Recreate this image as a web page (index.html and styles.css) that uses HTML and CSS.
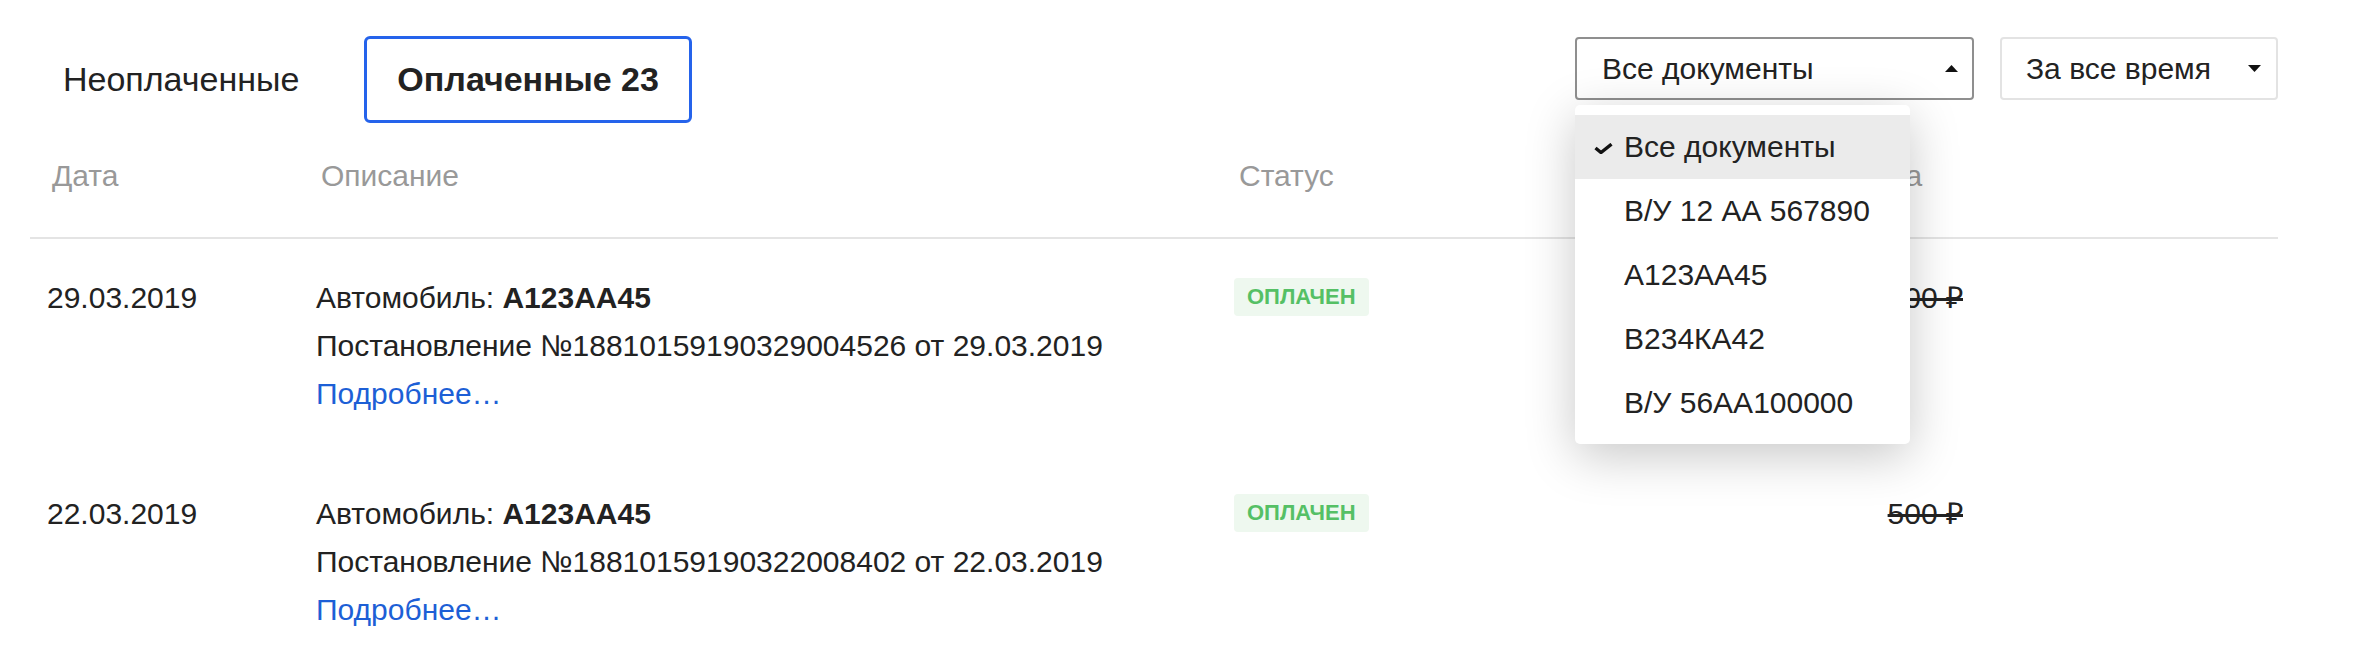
FILE: index.html
```html
<!DOCTYPE html>
<html lang="ru">
<head>
    <meta charset="UTF-8">
    <meta name="viewport" content="width=device-width, initial-scale=1.0">
    <title>Штрафы</title>
    <link rel="stylesheet" href="styles.css">
</head>
<body>
    <div class="page">
        <div class="toolbar">
            <div class="tabs">
                <div class="tab">Неоплаченные</div>
                <div class="tab active">Оплаченные 23</div>
            </div>
            <div class="filters">
                <div class="select-wrap">
                    <div class="select open">
                        <span>Все документы</span>
                        <svg class="arrow" width="13" height="7" viewBox="0 0 13 7"><polygon points="0,7 6.5,0 13,7"/></svg>
                    </div>
                    <div class="dropdown">
                        <div class="option selected">
                            <svg class="check" width="19" height="11" viewBox="0 0 19 11"><path d="M1.5 5 L7 9.5 L17.5 1.2"/></svg>
                            Все документы
                        </div>
                        <div class="option">В/У 12 АА 567890</div>
                        <div class="option">А123АА45</div>
                        <div class="option">В234КА42</div>
                        <div class="option">В/У 56АА100000</div>
                    </div>
                </div>
                <div class="select period">
                    <span>За все время</span>
                    <svg class="arrow" width="13" height="7" viewBox="0 0 13 7"><polygon points="0,0 13,0 6.5,7"/></svg>
                </div>
            </div>
        </div>

        <div class="table">
            <div class="thead">
                <div>Дата</div>
                <div>Описание</div>
                <div>Статус</div>
                <div>Сумма</div>
            </div>
            <div class="row">
                <div class="date">29.03.2019</div>
                <div class="desc">
                    <div>Автомобиль: <b>А123АА45</b></div>
                    <div>Постановление №18810159190329004526 от 29.03.2019</div>
                    <a href="#" class="more">Подробнее…</a>
                </div>
                <div class="status"><span class="badge">Оплачен</span></div>
                <div class="amount"><s>500 ₽</s></div>
            </div>
            <div class="row">
                <div class="date">22.03.2019</div>
                <div class="desc">
                    <div>Автомобиль: <b>А123АА45</b></div>
                    <div>Постановление №18810159190322008402 от 22.03.2019</div>
                    <a href="#" class="more">Подробнее…</a>
                </div>
                <div class="status"><span class="badge">Оплачен</span></div>
                <div class="amount"><s>500 ₽</s></div>
            </div>
        </div>
    </div>
</body>
</html>
```

FILE: styles.css
```css
body {
    font-family: "Liberation Sans", Arial, sans-serif;
    margin: 0;
    padding: 0;
    background: #fff;
    color: #222;
}
.page {
    padding: 36px 92px 0 30px;
}
.toolbar {
    display: flex;
    justify-content: space-between;
    align-items: flex-start;
}
.tabs {
    display: flex;
    gap: 32px;
}
.tab {
    font-size: 34px;
    line-height: 41px;
    padding: 20px 30px;
    border: 3px solid transparent;
    border-radius: 6px;
    cursor: pointer;
}
.tab.active {
    font-weight: bold;
    border-color: #2563eb;
}
.filters {
    display: flex;
    gap: 26px;
    padding-top: 1px;
}
.select-wrap {
    position: relative;
}
.select {
    display: flex;
    justify-content: space-between;
    align-items: center;
    box-sizing: border-box;
    height: 63px;
    width: 399px;
    padding: 0 14px 0 25px;
    border: 2px solid #e3e3e3;
    border-radius: 4px;
    font-size: 30px;
    line-height: 59px;
    background: #fff;
    cursor: pointer;
}
.select.open {
    border-color: #8f8f8f;
}
.select.period {
    width: 278px;
    padding: 0 15px 0 24px;
}
.arrow {
    fill: #111;
}
.dropdown {
    position: absolute;
    top: 68px;
    left: 0;
    width: 335px;
    padding: 10px 0 9px;
    background: #fff;
    border-radius: 5px;
    box-shadow: 0 12px 50px rgba(0, 0, 0, 0.22);
    z-index: 10;
}
.option {
    position: relative;
    height: 64px;
    line-height: 64px;
    padding-left: 49px;
    font-size: 30px;
}
.option.selected {
    background: #ebebeb;
}
.check {
    position: absolute;
    left: 19px;
    top: 28px;
    fill: none;
    stroke: #111;
    stroke-width: 3.4;
}
.table {
    margin-top: 29px;
}
.thead {
    display: grid;
    grid-template-columns: 269px 918px 589px 140px;
    padding: 0 0 37px 22px;
    border-bottom: 2px solid #e4e4e4;
    font-size: 30px;
    line-height: 48px;
    color: #999;
}
.row {
    display: grid;
    grid-template-columns: 269px 918px 589px 140px;
    padding: 35px 0 37px 17px;
    font-size: 30px;
    line-height: 48px;
}
.more {
    color: #1d5fd6;
    text-decoration: none;
}
.status {
    display: flex;
    align-items: flex-start;
    padding-top: 4px;
}
.badge {
    display: inline-block;
    font-size: 22px;
    line-height: 26px;
    font-weight: bold;
    text-transform: uppercase;
    color: #55c065;
    background: #eef8ef;
    padding: 6px 13px;
    border-radius: 4px;
}
.amount {
    text-align: right;
}
```
